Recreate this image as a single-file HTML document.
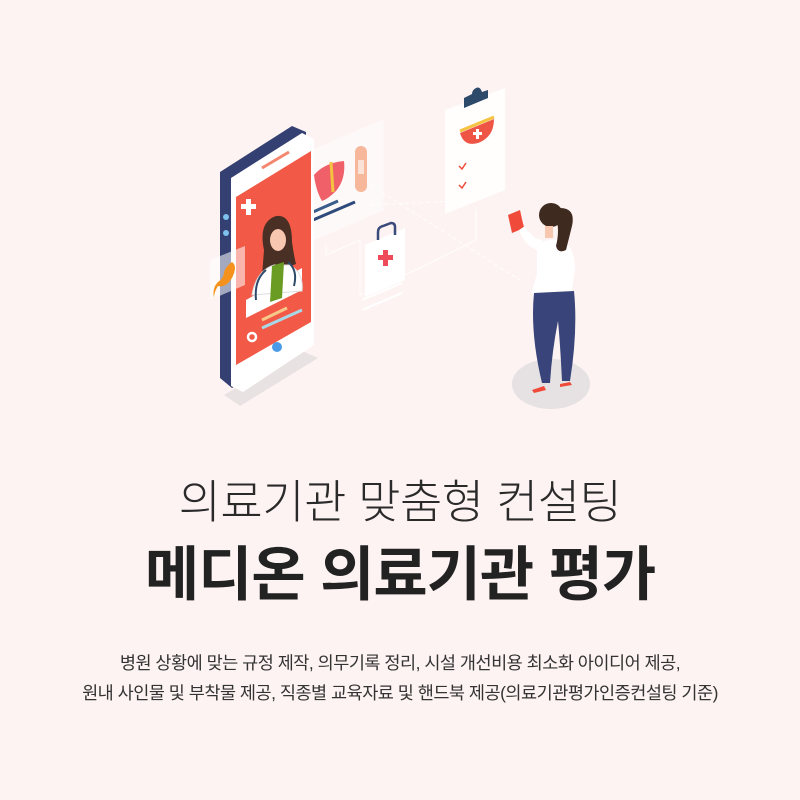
<!DOCTYPE html>
<html><head><meta charset="utf-8"><style>
html,body{margin:0;padding:0}
body{width:800px;height:800px;background:#fdf3f2;position:relative;overflow:hidden;font-family:"Liberation Sans","Noto Sans CJK KR",sans-serif;color:#222}
svg{position:absolute;left:0;top:0}
.t{position:absolute;left:0;width:800px;text-align:center;white-space:nowrap}
#t1{top:466px;font-size:46px;font-weight:300;color:#2a2a2a;letter-spacing:-0.5px}
#t2{top:527px;font-size:59px;font-weight:700;color:#222;letter-spacing:-1px}
.b{font-size:17.5px;color:#333;letter-spacing:-0.5px}
#b1{top:650px}#b2{top:680px}
</style></head><body>
<svg width="800" height="460" viewBox="0 0 800 460">
<polygon points="224,395 300,350 318,358 240,406" fill="#e8e2e2"/>
<ellipse cx="551" cy="384" rx="39" ry="25" fill="#e6e1e2"/>
<g stroke="#fff" stroke-width="1" fill="none" opacity=".9">
<line x1="370" y1="185" x2="520" y2="280" stroke-dasharray="4,3"/>
<line x1="370" y1="205" x2="476" y2="200" stroke-dasharray="4,3"/>
<polyline points="326,245 326,255 360,240 360,295 420,268 476,240 476,210"/>
</g>
<polygon points="313,150 383,120 383,210 313,240" fill="#fff" opacity=".55" stroke="#fff"/>
<polygon points="445,110 505,88 505,190 445,214" fill="#fff" opacity=".85"/>
<polygon points="365,245 405,228 405,280 365,297" fill="#fff"/>
<path d="M378 240 v-8 q0-5 5-6 l8-3 q4 0 4 4 v8" stroke="#3a4a7a" stroke-width="2.5" fill="none"/>
<rect x="383" y="250" width="5" height="16" fill="#ee4a5a"/><rect x="378" y="255" width="15" height="5" fill="#ee4a5a"/>
<line x1="362" y1="300" x2="402" y2="283" stroke="#fff" stroke-width="2"/>
<line x1="362" y1="310" x2="402" y2="293" stroke="#fff" stroke-width="2"/>
<path d="M464 108 l24-10 v-8 l-6 2 q-2-6-6-4 q-4 2-4 6 l-8 4z" fill="#2e4a6a"/>
<path d="M460 133 l34-14 q0 18-16 24 q-14 4-18-10z" fill="#ef5545"/>
<line x1="460" y1="131" x2="494" y2="117" stroke="#f4c340" stroke-width="3"/>
<rect x="476" y="129" width="3" height="10" fill="#fff"/><rect x="473" y="132" width="9" height="3" fill="#fff"/>
<path d="M459 166 l3 3 l4-6 M459 185 l3 3 l4-6" stroke="#ef4a3a" stroke-width="1.5" fill="none"/>
<polygon points="297,170 313,163 313,240 300,246" fill="#fcd0cc"/>
<path d="M314 175 q10-12 30-14 q2 18-8 30 q-8 8-14 10 q-6-10-8-26z" fill="#f06068"/>
<line x1="331" y1="162" x2="333" y2="192" stroke="#f4c340" stroke-width="3"/>
<rect x="355" y="146" width="12" height="46" rx="6" fill="#f6b79a"/>
<rect x="358" y="160" width="6" height="14" fill="#fff" opacity=".6"/>
<line x1="313" y1="212" x2="338" y2="201" stroke="#3a5c8a" stroke-width="3"/>
<line x1="313" y1="220" x2="355" y2="202" stroke="#2e4a7a" stroke-width="3"/>
<polygon points="220,172 292,126 306,132 306,345 232,388 220,378" fill="#344071"/>
<polygon points="231,178 302,133 314,139 314,345 243,392 231,386" fill="#fff"/>
<polygon points="236,197 311,151 311,322 236,365" fill="#f25a47"/>
<line x1="262" y1="168" x2="289" y2="152" stroke="#f4876f" stroke-width="3"/>
<circle cx="226" cy="217" r="3" fill="#7ec0ee"/><circle cx="226" cy="233" r="3" fill="#7ec0ee"/>
<rect x="246" y="199" width="5" height="16" fill="#fff"/><rect x="241" y="204" width="15" height="5" fill="#fff"/>
<polygon points="246,300 302,268 302,290 246,318" fill="#fff"/>
<path d="M264 250 q-6-28 12-34 q16-2 16 26 q2 14 4 22 l-34 12z" fill="#4a2f24"/>
<ellipse cx="278" cy="240" rx="8" ry="11" fill="#f8c7b0"/>
<path d="M252 295 q4-24 22-30 l16 0 q14 8 12 26 z" fill="#fff" stroke="#ddd"/>
<polygon points="272,266 284,262 282,298 270,302" fill="#6a9b22"/>
<path d="M266 270 q-12 10-10 30 M288 262 q10 8 6 24" stroke="#2e4a6a" stroke-width="2" fill="none"/>
<line x1="262" y1="320" x2="287" y2="308" stroke="#f6c98a" stroke-width="3"/>
<line x1="262" y1="328" x2="302" y2="310" stroke="#a8d8e8" stroke-width="3"/>
<circle cx="252" cy="337" r="4" fill="none" stroke="#fff" stroke-width="2.5"/>
<circle cx="277" cy="347" r="5" fill="#4a9ae8"/>
<polygon points="210,260 245,246 245,285 210,300" fill="#fff" opacity=".55"/>
<path d="M232 262 q6 4 0 16 q-6 10-14 8 q-4 6-4 12 q-2-10 4-16 q6-4 6-10 q2-6 8-10z" fill="#f5921e"/>
<path d="M521 234 q-6-8 2-10 l6 8 q-2 4-8 2z" fill="#f8c7b0"/>
<polygon points="508,215 520,210 524,228 512,233" fill="#ef4a3a"/>
<path d="M537 250 q-12-4-18-20 l6-4 q8 14 18 14z" fill="#fff"/>
<path d="M537 246 q8-8 24-6 q14 6 14 30 l-4 26 q-18 6-40-2 l6-20z" fill="#fff"/>
<path d="M534 293 l40 -2 q4 40-4 90 l-8 0 q-2-40-4-60 q-6 30-8 62 l-8 0 q-12-50-8-90z" fill="#38447a"/>
<path d="M532 390 l12-4 l2 4 l-12 3z M560 384 l10-2 l2 3 l-12 2z" fill="#ef4a3a"/>
<circle cx="551" cy="215" r="12" fill="#3f2a20"/>
<path d="M560 208 q16 0 12 18 q-4 16-6 24 q-8 4-10-4 q4-16 0-28z" fill="#3f2a20"/>
<rect x="545" y="226" width="8" height="12" fill="#f8c7b0"/>
</svg>
<div class="t" id="t1">의료기관 맞춤형 컨설팅</div>
<div class="t" id="t2">메디온 의료기관 평가</div>
<div class="t b" id="b1">병원 상황에 맞는 규정 제작, 의무기록 정리, 시설 개선비용 최소화 아이디어 제공,</div>
<div class="t b" id="b2">원내 사인물 및 부착물 제공, 직종별 교육자료 및 핸드북 제공(의료기관평가인증컨설팅 기준)</div>
</body></html>
